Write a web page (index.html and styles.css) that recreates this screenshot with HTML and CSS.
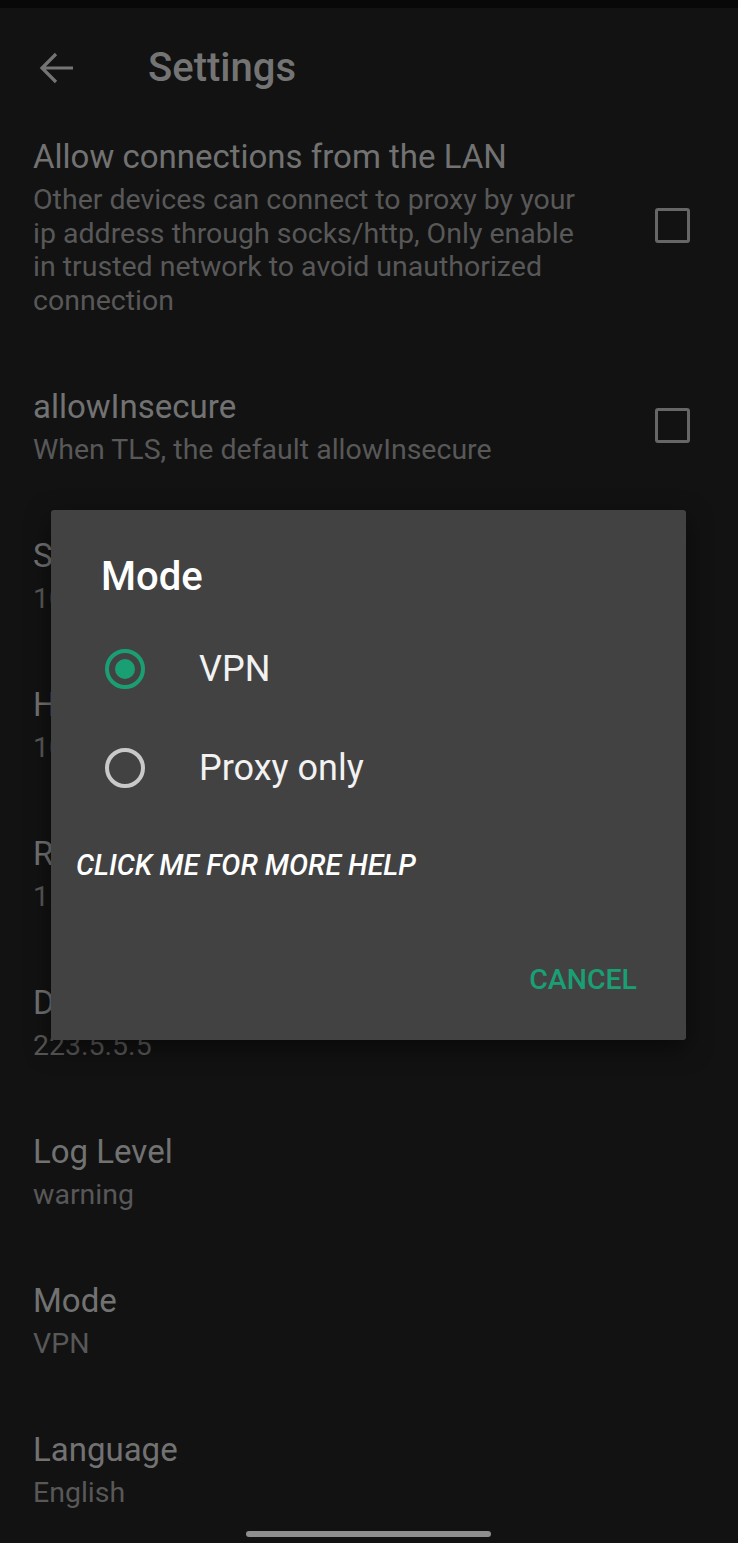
FILE: index.html
```html
<!DOCTYPE html>
<html lang="en">

<head>
    <meta charset="UTF-8">
    <meta name="viewport" content="width=device-width, initial-scale=1.0">
    <title>Settings</title>
    <link rel="stylesheet" href="styles.css">
</head>

<body>
    <div class="status-bar"></div>

    <header class="toolbar">
        <svg class="back" width="36" height="32" viewBox="0 0 36 32">
            <path d="M34 16H4M17 2L3 16l14 14" fill="none" stroke="#747474" stroke-width="3.2" />
        </svg>
        <h1 class="toolbar-title">Settings</h1>
    </header>

    <div class="pref-list">
        <div class="pref">
            <div class="pref-text">
                <div class="pref-title">Allow connections from the LAN</div>
                <div class="pref-summary">Other devices can connect to proxy by your ip address through socks/http, Only enable in trusted network to avoid unauthorized connection</div>
            </div>
            <div class="checkbox"></div>
        </div>
        <div class="pref">
            <div class="pref-text">
                <div class="pref-title">allowInsecure</div>
                <div class="pref-summary">When TLS, the default allowInsecure</div>
            </div>
            <div class="checkbox"></div>
        </div>
        <div class="pref">
            <div class="pref-text">
                <div class="pref-title">SOCKS5 proxy port</div>
                <div class="pref-summary">10808</div>
            </div>
        </div>
        <div class="pref">
            <div class="pref-text">
                <div class="pref-title">HTTP proxy port</div>
                <div class="pref-summary">10809</div>
            </div>
        </div>
        <div class="pref">
            <div class="pref-text">
                <div class="pref-title">Remote DNS (udp/tcp/https/quic)</div>
                <div class="pref-summary">1.1.1.1</div>
            </div>
        </div>
        <div class="pref">
            <div class="pref-text">
                <div class="pref-title">Domestic DNS (Optional)</div>
                <div class="pref-summary">223.5.5.5</div>
            </div>
        </div>
        <div class="pref">
            <div class="pref-text">
                <div class="pref-title">Log Level</div>
                <div class="pref-summary">warning</div>
            </div>
        </div>
        <div class="pref">
            <div class="pref-text">
                <div class="pref-title">Mode</div>
                <div class="pref-summary">VPN</div>
            </div>
        </div>
        <div class="pref">
            <div class="pref-text">
                <div class="pref-title">Language</div>
                <div class="pref-summary">English</div>
            </div>
        </div>
    </div>

    <div class="dialog">
        <h2 class="dialog-title">Mode</h2>
        <div class="choice">
            <span class="radio checked"></span>
            <span class="choice-label">VPN</span>
        </div>
        <div class="choice">
            <span class="radio"></span>
            <span class="choice-label">Proxy only</span>
        </div>
        <div class="help">CLICK ME FOR MORE HELP</div>
        <div class="dialog-actions">
            <span class="btn">CANCEL</span>
        </div>
    </div>

    <div class="home-bar"></div>
</body>
</html>
```

FILE: styles.css
```css
body {
    font-family: 'Roboto', 'Noto Sans', sans-serif;
    background: #121212;
    margin: 0;
    padding: 0;
    width: 738px;
    height: 1543px;
    overflow: hidden;
    position: relative;
}

.status-bar {
    height: 8px;
    background: #080808;
}

.toolbar {
    display: flex;
    align-items: center;
    height: 95px;
    box-sizing: border-box;
    padding-top: 25px;
}

.back {
    margin-left: 39px;
    margin-right: 73px;
}

.toolbar-title {
    margin: 0;
    font-size: 40px;
    font-weight: 500;
    color: #747474;
    line-height: 40px;
}

.pref {
    display: flex;
    align-items: center;
    padding: 35.25px 48px 35.25px 33px;
}

.pref-text {
    flex: 1;
    padding-right: 60px;
}

.pref-title {
    font-size: 33px;
    line-height: 38px;
    color: #727272;
}

.pref-summary {
    font-size: 28.5px;
    line-height: 33.5px;
    margin-top: 7px;
    color: #585858;
}

.checkbox {
    width: 29px;
    height: 29px;
    border: 3px solid #666;
    border-radius: 3px;
    flex-shrink: 0;
    margin-top: -4px;
}

.dialog {
    position: absolute;
    left: 51px;
    top: 510px;
    width: 635px;
    height: 530px;
    box-sizing: border-box;
    background: #424242;
    border-radius: 3px;
    box-shadow: 0 8px 24px rgba(0, 0, 0, 0.5);
    padding-top: 47px;
    display: flex;
    flex-direction: column;
}

.dialog-title {
    margin: 0 0 22px 50px;
    font-size: 40px;
    line-height: 40px;
    font-weight: 500;
    color: #fff;
}

.choice {
    display: flex;
    align-items: center;
    height: 99px;
    padding-left: 54px;
}

.radio {
    width: 32px;
    height: 32px;
    border: 4px solid #c9c9c9;
    border-radius: 50%;
    margin-right: 54px;
    position: relative;
}

.radio.checked {
    border-color: #1a9f75;
}

.radio.checked::after {
    content: "";
    position: absolute;
    left: 6px;
    top: 6px;
    width: 20px;
    height: 20px;
    border-radius: 50%;
    background: #1a9f75;
}

.choice-label {
    font-size: 36px;
    color: #f2f2f2;
}

.help {
    margin: 31px 0 0 25px;
    font-size: 28.5px;
    line-height: 36px;
    font-style: italic;
    font-weight: 500;
    color: #fff;
}

.dialog-actions {
    display: flex;
    justify-content: flex-end;
    margin-top: 78px;
    padding-right: 49px;
}

.btn {
    font-size: 28.5px;
    line-height: 36px;
    font-weight: 500;
    color: #1a9f75;
}

.home-bar {
    position: absolute;
    left: 246px;
    bottom: 6px;
    width: 245px;
    height: 6px;
    border-radius: 3px;
    background: #8e8e8e;
}
```
